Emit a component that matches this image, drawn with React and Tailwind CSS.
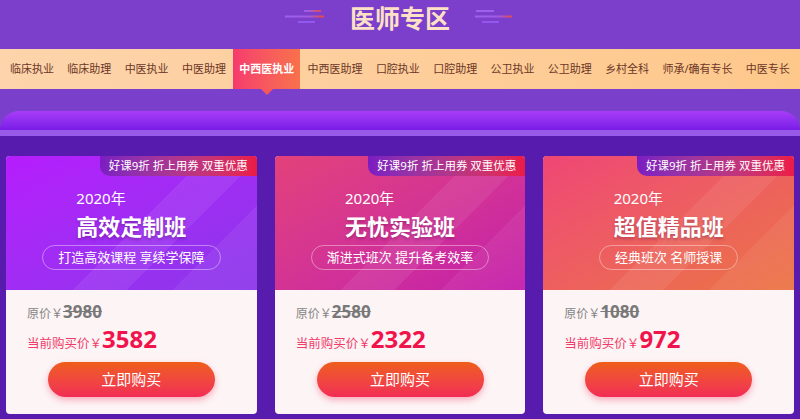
import React from 'react'

const tabs = [
  '临床执业',
  '临床助理',
  '中医执业',
  '中医助理',
  '中西医执业',
  '中西医助理',
  '口腔执业',
  '口腔助理',
  '公卫执业',
  '公卫助理',
  '乡村全科',
  '师承/确有专长',
  '中医专长',
]

const cards = [
  {
    title: '高效定制班',
    slogan: '打造高效课程 享续学保障',
    was: '3980',
    now: '3582',
    bg: 'bg-gradient-to-br from-[#b61cfd] to-[#8a36ea]',
  },
  {
    title: '无忧实验班',
    slogan: '渐进式班次 提升备考效率',
    was: '2580',
    now: '2322',
    bg: 'bg-gradient-to-br from-[#e3417a] to-[#c41bab]',
  },
  {
    title: '超值精品班',
    slogan: '经典班次 名师授课',
    was: '1080',
    now: '972',
    bg: 'bg-gradient-to-br from-[#ef4675] to-[#eb7342]',
  },
]

function Deco({ flip }) {
  // three short speed lines beside the title
  const id = flip ? 'decoR' : 'decoL'
  return (
    <svg width="40" height="16" viewBox="0 0 40 16" className="mt-[5px]">
      <defs>
        <linearGradient id={id} gradientUnits="userSpaceOnUse" x1="0" x2="40" y1="0" y2="0">
          <stop offset="0" stopColor="#9a63f0" />
          <stop offset="0.6" stopColor="#a45ae0" />
          <stop offset="1" stopColor="#f2482a" />
        </linearGradient>
      </defs>
      {flip ? (
        <>
          <rect x="1" y="2" width="18" height="2" fill="#9c62ee" />
          <rect x="0" y="7.5" width="37" height="2" fill={`url(#${id})`} />
          <rect x="7" y="13" width="17" height="2" fill="#9357ee" />
        </>
      ) : (
        <>
          <rect x="19" y="2" width="17" height="2" fill={`url(#${id})`} />
          <rect x="0" y="7.5" width="39" height="2" fill={`url(#${id})`} />
          <rect x="13" y="13" width="17" height="2" fill="#9357ee" />
        </>
      )}
    </svg>
  )
}

function Card({ card }) {
  return (
    <div className="w-[251px] rounded-[4px] overflow-hidden bg-[#fdf4f5]">
      <div className={`relative h-[134px] ${card.bg}`}>
        <div className="absolute inset-0 bg-[linear-gradient(135deg,transparent_52%,rgba(255,255,255,0.07)_52%,rgba(255,255,255,0.07)_66%,transparent_66%,transparent_78%,rgba(255,255,255,0.06)_78%)]"></div>
        <div className="absolute top-0 right-0 w-[157px] h-[20px] rounded-bl-[10px] bg-gradient-to-r from-[#7b1cc2] to-[#ec1a45] text-white text-[11.5px] leading-[20px] text-center">
          好课9折 折上用券 双重优惠
        </div>
        <div className="relative flex flex-col items-center pt-[32px] text-white">
          <div className="flex flex-col items-start">
            <div className="text-[15px] leading-[20px]">2020年</div>
            <div className="mt-[4px] text-[22px] leading-[28px] font-bold [text-shadow:0_2px_3px_rgba(60,0,60,0.3)]">
              {card.title}
            </div>
          </div>
          <div className="mt-[5px] h-[25px] px-[15px] rounded-full border border-white/40 text-[13px] leading-[23px]">
            {card.slogan}
          </div>
        </div>
      </div>
      <div className="px-[21px] pt-[13px] pb-[17px]">
        <div className="flex items-baseline h-[18px] leading-[18px] text-[#858585]">
          <span className="text-[12px]">原价</span>
          <span className="text-[12px]">￥</span>
          <span className="text-[17px] font-bold text-[#787878] line-through">{card.was}</span>
        </div>
        <div className="mt-[4px] flex items-baseline h-[28px] leading-[28px] text-[#f03b68]">
          <span className="text-[12.5px]">当前购买价</span>
          <span className="text-[12.5px]">￥</span>
          <span className="text-[24px] font-bold text-[#f0134c]">{card.now}</span>
        </div>
        <button className="mt-[9px] mx-auto flex items-center justify-center w-[167px] h-[35px] rounded-full bg-gradient-to-b from-[#ee5d16] to-[#f22a54] text-white text-[15px] shadow-[0_3px_6px_rgba(235,40,80,0.35)]">
          立即购买
        </button>
      </div>
    </div>
  )
}

export default function App() {
  return (
    <div className="w-[800px] h-[419px] overflow-hidden bg-[#571cad] font-['Noto_Sans','Noto_Sans_CJK_SC',sans-serif]">
      <div className="h-[49px] bg-[#7b3fcb] flex justify-center items-start pt-[3px] gap-[25px]">
        <Deco />
        <h1 className="text-[25px] leading-[30px] font-bold text-[#fde1c6]">医师专区</h1>
        <Deco flip />
      </div>

      <div className="relative z-10 h-[40px] flex justify-between px-[4px] bg-gradient-to-r from-[#fdd4ab] to-[#fec88b]">
        {tabs.map((t) =>
          t === '中西医执业' ? (
            <div
              key={t}
              className="relative flex items-center px-[6px] text-[11px] font-bold text-white bg-gradient-to-r from-[#f63a6d] to-[#f8714a]"
            >
              {t}
              <span className="absolute top-full left-1/2 -translate-x-1/2 w-0 h-0 border-x-[6px] border-x-transparent border-t-[6px] border-t-[#f7565c]"></span>
            </div>
          ) : (
            <div key={t} className="flex items-center px-[6px] text-[11px] text-[#6b3627]">
              {t}
            </div>
          )
        )}
      </div>

      <div className="bg-[#7a3fcb] pt-[22px]">
        <div className="h-[19px] rounded-t-[20px] bg-gradient-to-b from-[#a83cf8] to-[#7a1be6]"></div>
      </div>
      <div className="h-[6px] bg-[#9a5ae9]"></div>

      <div className="flex gap-[18px] px-[6px] pt-[20px]">
        {cards.map((c) => (
          <Card key={c.title} card={c} />
        ))}
      </div>
    </div>
  )
}
